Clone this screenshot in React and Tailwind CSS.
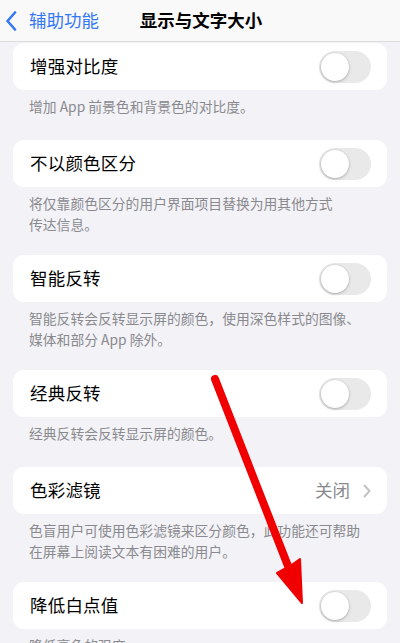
import React from "react";

const font = { fontFamily: '"Noto Sans CJK SC", "Noto Sans", sans-serif' };

function Toggle() {
  return (
    <div className="w-[52px] h-[32px] rounded-full bg-[#e9e9ea] p-[2px] flex items-center">
      <div className="w-[28px] h-[28px] rounded-full bg-white shadow-[0_1px_3px_rgba(0,0,0,0.25),0_0_0_0.5px_rgba(0,0,0,0.06)]" />
    </div>
  );
}

function Section({ title, footer, right, two }) {
  return (
    <div>
      <div className="mx-[13px] h-[47px] bg-white rounded-[11px] flex items-center justify-between pl-[17px] pr-[16px]">
        <span className="text-[17.5px] text-black tracking-[0.2px]">{title}</span>
        {right || <Toggle />}
      </div>
      <div className={"px-[29px] pt-[6px] text-[13.8px] leading-[21px] text-[#8a8a8e] " + (two ? "pb-[20px]" : "pb-[23px]")}>
        {footer}
      </div>
    </div>
  );
}

export default function App() {
  return (
    <div className="relative w-[400px] h-[643px] overflow-hidden bg-[#f2f2f7]" style={font}>
      <div className="h-[42px] bg-[#f9f9f9] border-b border-[#dcdcdf] relative flex items-center">
        <div className="flex items-center pl-[5px] gap-[12px]">
          <svg width="12" height="20" viewBox="0 0 12 20">
            <path d="M10 1.5 L2.5 10 L10 18.5" fill="none" stroke="#3478f6" strokeWidth="2.6" strokeLinecap="round" strokeLinejoin="round" />
          </svg>
          <span className="text-[17.5px] text-[#3478f6]">辅助功能</span>
        </div>
        <div className="absolute left-0 right-0 top-0 h-full flex items-center justify-center pointer-events-none">
          <span className="text-[17.5px] font-semibold text-black pl-[2px]">显示与文字大小</span>
        </div>
      </div>
      <div className="pt-[1px]">
        <Section title="增强对比度" footer="增加 App 前景色和背景色的对比度。" />
        <Section two title="不以颜色区分" footer={<>将仅靠颜色区分的用户界面项目替换为用其他方式<br />传达信息。</>} />
        <Section two title="智能反转" footer={<>智能反转会反转显示屏的颜色，使用深色样式的图像、<br />媒体和部分 App 除外。</>} />
        <Section title="经典反转" footer="经典反转会反转显示屏的颜色。" />
        <Section
          two
          title="色彩滤镜"
          footer={<>色盲用户可使用色彩滤镜来区分颜色，此功能还可帮助<br />在屏幕上阅读文本有困难的用户。</>}
          right={
            <div className="flex items-center gap-[13px]">
              <span className="text-[17.5px] text-[#8a8a8e]">关闭</span>
              <svg width="8" height="14" viewBox="0 0 8 14">
                <path d="M1.5 1.5 L6.5 7 L1.5 12.5" fill="none" stroke="#c4c4c7" strokeWidth="2" strokeLinecap="round" strokeLinejoin="round" />
              </svg>
            </div>
          }
        />
        <Section title="降低白点值" footer="降低亮色的强度。" />
      </div>
      <svg className="absolute left-0 top-0 pointer-events-none" width="400" height="643" viewBox="0 0 400 643">
        <line x1="215" y1="379" x2="288" y2="566" stroke="#f00000" strokeWidth="8" strokeLinecap="round" />
        <polygon points="277,573 290,566 300,559 302,603" fill="#f00000" stroke="#f00000" strokeWidth="2" strokeLinejoin="round" />
      </svg>
    </div>
  );
}
